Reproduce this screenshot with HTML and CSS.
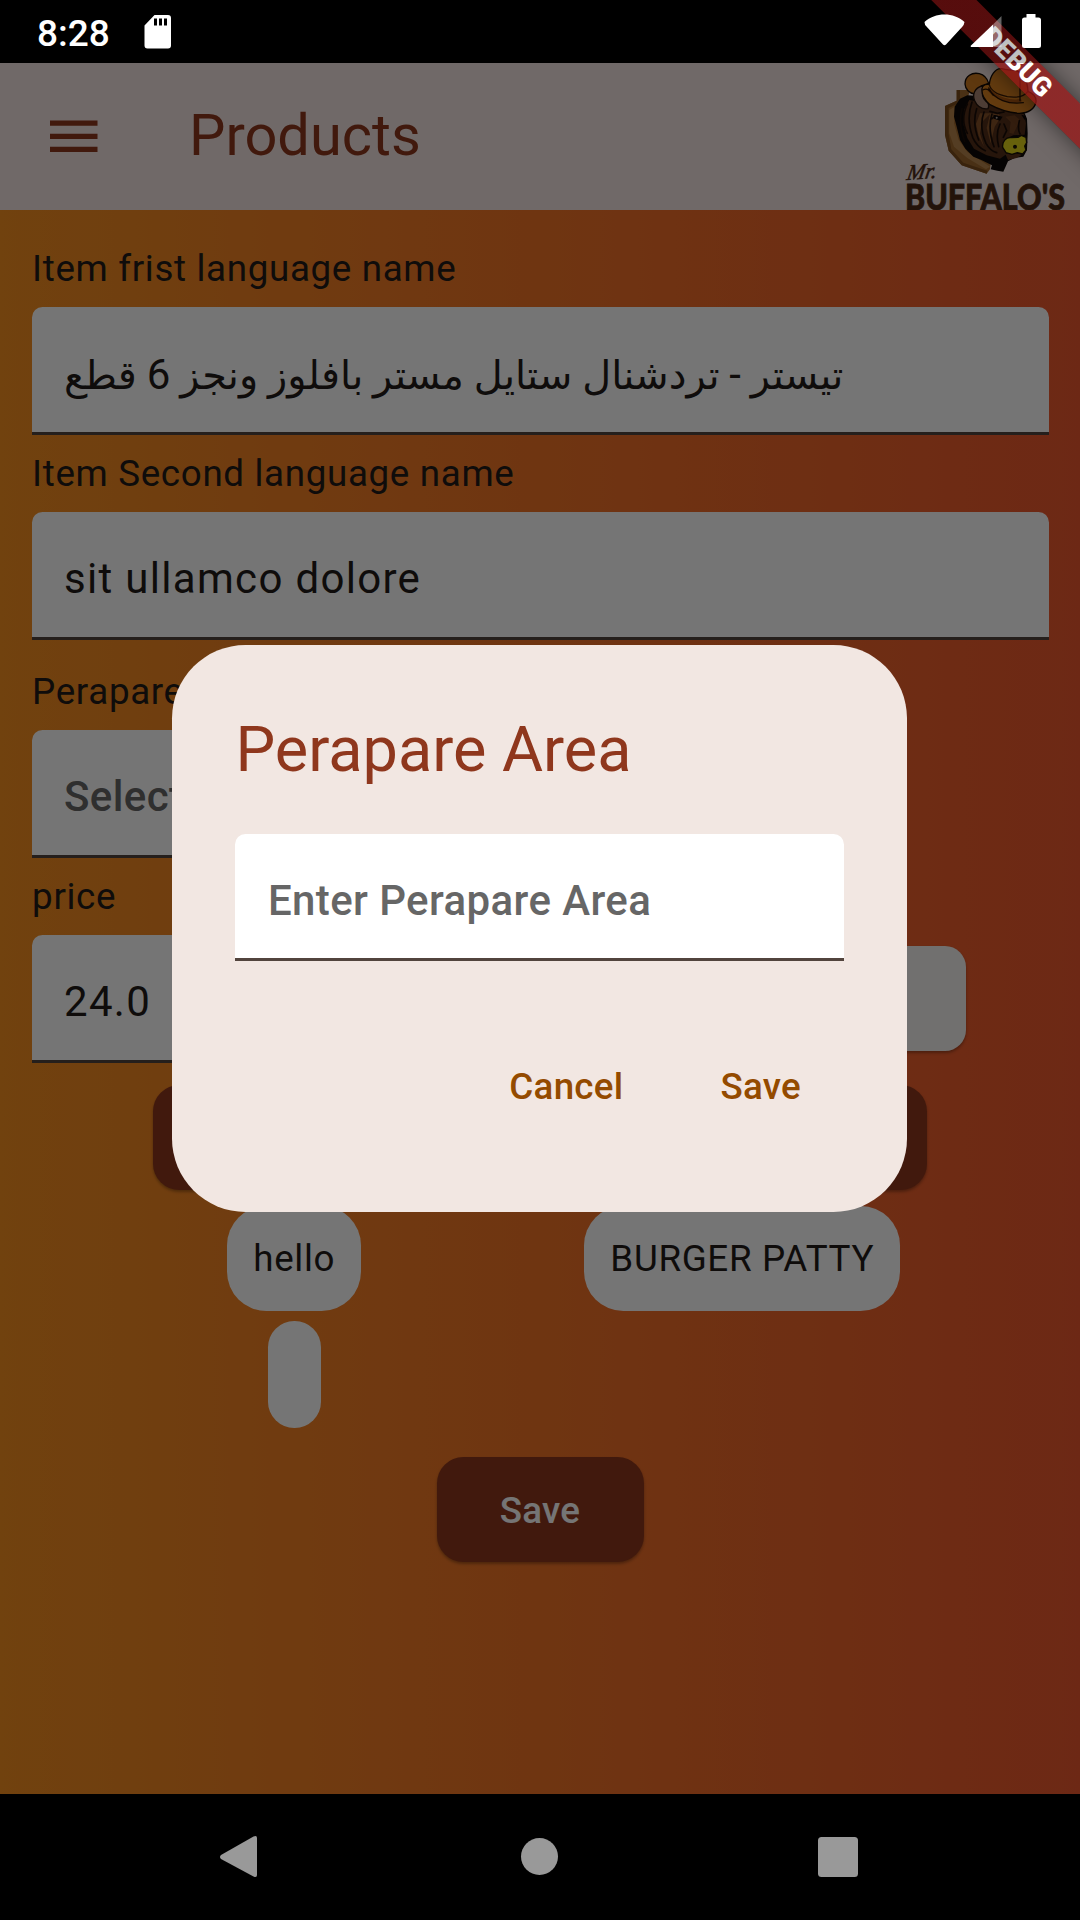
FILE: index.html
```html
<!DOCTYPE html>
<html lang="en">
<head>
<meta charset="utf-8">
<title>Products</title>
<link rel="stylesheet" href="styles.css">
</head>
<body>
<div class="screen">
  <header class="appbar">
    <svg class="menu" width="48" height="34" viewBox="0 0 48 34"><path d="M0 0.5h47.5v5.2H0zM0 13.7h47.5v5.2H0zM0 26.8h47.5V32H0z"/></svg>
    <h1 class="appbar-title">Products</h1>
    <svg class="logo" width="168" height="147" viewBox="0 0 168 147">
      <g transform="translate(-24 -63) scale(.33333)" stroke-linejoin="round" stroke-linecap="round">
        <path d="M230 270H270L262 300 240 330 300 470 332 492 330 508 320 521 245 496 206 452 195 405V318L230 302z" fill="#a06a2e"/>
        <path d="M208 330V400L222 440 262 474 318 508 330 500 300 480 262 456 236 420 222 370 224 320z" fill="#b8864c"/>
        <path d="M195 318 230 302V270H240V308L206 324V402L214 448 250 488 322 512 320 521 245 496 206 452 195 405z" fill="#7d4e1e"/>
        <path d="M262 286 240 296 224 320 222 350 230 380 240 420 256 446 280 470 304 480 336 496 332 508 352 512 370 515 384 484 404 474 430 470 441 450 443 400 441 356 430 330 330 290z" fill="#0d0807"/>
        <path d="M268 300 252 330 250 372 262 414 282 446 320 466 360 476 380 462 370 440 376 418 400 406 434 404 438 370 432 342 380 330 320 310z" fill="#532e18"/>
        <path d="M300 340 288 372 296 408 312 440 300 400 306 366 330 342 320 384 332 430 344 380 362 352 354 340z" fill="#865128"/>
        <path d="M376 350 392 366 388 398 400 402 420 360 404 346z" fill="#70401f"/>
        <path d="M262 312Q240 360 262 400M276 306Q258 356 278 412 290 440 316 452M290 326Q276 370 296 420M312 336Q296 380 318 430 330 452 350 458M336 342Q322 386 342 440M360 372Q346 400 356 440M372 372 380 392 370 412M418 362Q412 388 420 402M330 334 352 340 372 336M336 356 346 348 360 352M246 326Q234 370 254 424" fill="none" stroke="#180c07" stroke-width="5"/>
        <path d="M340 344 368 350 360 362 342 356zM424 344 438 348 434 360z" fill="#0b0606"/>
        <circle cx="350" cy="353" r="3" fill="#b8a79d"/>
        <path d="M376 462 400 458 426 464 410 474 384 480z" fill="#5b321b"/>
        <path d="M255 252C255 228 276 216 298 221 314 225 322 236 326 250L304 258 284 282C268 280 256 268 255 252z" fill="#cc7a22" stroke="#150b06" stroke-width="4"/>
        <path d="M306 258C284 264 276 284 284 302 292 320 308 328 324 326 328 318 326 308 318 304 308 296 302 278 312 262z" fill="#a98673" stroke="#1f110b" stroke-width="4"/>
        <path d="M306 266C308 256 318 252 328 254 330 228 346 204 364 206 378 208 388 212 404 210 428 218 442 236 444 274 458 280 470 290 468 306 464 326 446 340 418 340 384 338 352 326 330 314 314 300 304 284 306 266z" fill="#d88222" stroke="#150b06" stroke-width="4"/>
        <path d="M328 254C332 274 352 284 382 290 410 294 434 288 444 274" fill="none" stroke="#3a1a06" stroke-width="4"/>
        <path d="M330 272C350 296 392 308 420 302" fill="none" stroke="#a65412" stroke-width="10"/>
        <path d="M326 264C344 300 386 314 430 308M420 236V302M308 270C322 262 330 272 340 286" fill="none" stroke="#2a1305" stroke-width="4"/>
        <path d="M368 442C366 426 378 410 394 413L414 412 424 406 438 412 440 428 434 438 438 450 428 462 412 458 396 463 378 458z" fill="#e0d41c" stroke="#171006" stroke-width="4"/>
        <circle cx="405" cy="440" r="6" fill="#191007"/>
      </g>
      <text class="logo-script" transform="translate(2 117) rotate(-4) skewX(-14)">Mr.</text>
      <text x="1" y="146.500" class="logo-word" textLength="160" lengthAdjust="spacingAndGlyphs">BUFFALO'S</text>
    </svg>
  </header>

  <main class="content">
    <section class="group">
      <label class="label">Item frist language name</label>
      <div class="field"><bdi class="arabic" dir="rtl" lang="ar">تيستر <span class="digit">-</span> تردشنال ستايل مستر بافلوز ونجز <span class="digit">6</span> قطع</bdi></div>
    </section>
    <section class="group group-gap">
      <label class="label">Item Second language name</label>
      <div class="field">sit ullamco dolore</div>
    </section>
    <section class="group">
      <label class="label">Perapare Area</label>
      <div class="field half hint">Select</div>
    </section>
    <section class="group">
      <label class="label">price</label>
      <div class="price-row">
        <div class="field">24.0</div>
        <div class="pick"></div>
      </div>
    </section>
    <div class="wide-button"></div>
    <div class="chips">
      <div class="chip-col"><span class="chip">hello</span><span class="chip empty"></span></div>
      <div class="chip-col"><span class="chip">BURGER PATTY</span></div>
    </div>
    <div class="save-button">Save</div>
  </main>

  <div class="barrier">
    <div class="dialog">
      <h2 class="dialog-title">Perapare Area</h2>
      <div class="field hint dialog-field">Enter Perapare Area</div>
      <div class="actions"><span>Cancel</span><span>Save</span></div>
    </div>
  </div>

  <div class="banner">DEBUG</div>

  <div class="statusbar">
    <span class="clock">8:28</span>
    <svg class="sd" width="28" height="36" viewBox="0 0 28 36"><path fill-rule="evenodd" d="M10.500 1H24q3 0 3 3v27.500q0 3-3 3H3.500q-3 0-3-3V11.500zM10 4.500V11.500h3V4.500zM15 4.500V11.500h3V4.500zM20 4.500V11.500h3V4.500z"/></svg>
    <svg class="signals" width="118" height="36" viewBox="0 0 118 36">
      <path d="M0.500 8C11-2 30-2 40.500 8q-.5 3-2 4.500L22 30.500q-1.500 1.500-3 0L2.500 12.500Q.5 11 .5 8z"/>
      <path d="M77.500 2v31H69V10.500z" opacity=".38"/>
      <path d="M69 10.500V33H47q-.8-.5 0-1.500z"/>
      <path d="M102.500 0h9v3.500h3q2.500 0 2.500 2.500V31.500q0 2.500-2.500 2.500H100.500q-2.500 0-2.500-2.500V6Q98 3.500 100.500 3.500h2z"/>
    </svg>
  </div>

  <nav class="navbar">
    <svg width="640" height="44" viewBox="0 0 640 44">
      <path d="M1 20 33.500 1.500q3.500-1.500 3.500 1.500V40q0 3-3.500 1.500L1 24q-2-2 0-4z"/>
      <circle cx="319.500" cy="21.500" r="18.500"/>
      <rect x="598" y="2" width="40" height="40" rx="3.500"/>
    </svg>
  </nav>
</div>
</body>
</html>
```
FILE: styles.css
```css
* { box-sizing: border-box; }

body {
  margin: 0;
  background: #000;
  font-family: Roboto, "DejaVu Sans", sans-serif;
}

.screen {
  position: relative;
  display: flex;
  flex-direction: column;
  width: 1080px;
  height: 1920px;
  padding-top: 63px;
  overflow: hidden;
  background: #000;
}

/* App bar */
.appbar {
  display: flex;
  align-items: center;
  height: 147px;
  padding-left: 50px;
  background: #f4e5e2;
}

.menu { fill: #8f371d; }

.appbar-title {
  flex: 1;
  margin: -1px 0 0 91px;
  color: #8f371d;
  font-size: 57.75px;
  font-weight: 400;
  line-height: 73.5px;
}

.logo { margin-right: 8px; overflow: visible; }
.logo-script {
  fill: #4e2b16;
  stroke: #4e2b16;
  stroke-width: .5;
  font-family: "Liberation Serif", serif;
  font-size: 22px;
  font-style: italic;
}
.logo-word {
  fill: #4e2b16;
  stroke: #4e2b16;
  stroke-width: .8;
  font-family: Lato, sans-serif;
  font-size: 36px;
  font-weight: 900;
}

/* Form */
.content {
  flex: 1;
  display: flex;
  flex-direction: column;
  padding: 31.5px 31.5px 0;
  background: linear-gradient(90deg, #f69020, #ee582e);
  color: #221b19;
}

.group { height: 204.75px; }
.group-gap { margin-bottom: 13.5px; }

.label {
  display: block;
  margin-bottom: 13.4px;
  padding: 1.4px 0 0 .6px;
  height: 52.5px;
  font-size: 36.75px;
  line-height: 52.5px;
  letter-spacing: .66px;
}

.field {
  display: flex;
  align-items: center;
  height: 127.4px;
  padding: 8px 32.5px 0;
  border-bottom: 3px solid #52443d;
  border-radius: 10.5px 10.5px 0 0;
  background: #fff;
  font-size: 42px;
  line-height: 63px;
  letter-spacing: 1.31px;
}

.half { width: 480px; }
.hint { color: #666; font-weight: 500; letter-spacing: .4px; }

.arabic {
  padding-top: 2px;
  font-size: 39.8px;
  letter-spacing: 0;
  white-space: nowrap;
}
.digit { font-size: 42px; }

.price-row {
  display: grid;
  grid-template-columns: 480px 300px;
  align-items: center;
  gap: 154.5px;
}

.pick {
  height: 105px;
  border-radius: 21px;
  background: #f6f4f2;
  box-shadow: 0 2px 3px rgba(0, 0, 0, .3);
}

.wide-button, .save-button {
  align-self: center;
  height: 105px;
  border-radius: 26.25px;
  background: #8f371d;
  box-shadow: 0 2px 3px rgba(0, 0, 0, .3);
}
.wide-button { width: 774px; margin: 11.2px 0 15.4px; flex: none; }

.chips {
  display: grid;
  grid-template-columns: 448px 448px;
  justify-content: center;
  margin-left: -43.5px;
}
.chip-col {
  display: flex;
  flex-direction: column;
  align-items: center;
  gap: 10px;
}
.chip {
  padding: 27.25px 26.25px 0;
  height: 105px;
  border-radius: 39.4px;
  background: #fff;
  font-size: 36.75px;
  line-height: 52.5px;
  letter-spacing: .66px;
}
.empty { height: 107.6px; width: 52.5px; border-radius: 26.25px; }

.save-button {
  width: 207px;
  margin-top: 28.5px;
  color: #fff;
  font-size: 36.75px;
  font-weight: 500;
  line-height: 107px;
  letter-spacing: .26px;
  text-align: center;
}

/* Modal */
.barrier {
  position: absolute;
  inset: 63px 0 126px;
  background: rgba(0, 0, 0, .54);
}
.dialog {
  position: absolute;
  left: 172.4px;
  top: 582px;
  width: 735px;
  height: 567px;
  padding: 63px;
  border-radius: 73.5px;
  background: #f2e7e2;
}
.dialog-title {
  margin: 0 0 42px;
  color: #8f371d;
  font-size: 63px;
  font-weight: 400;
  line-height: 84px;
}
.actions {
  display: flex;
  justify-content: flex-end;
  gap: 97px;
  padding: 100px 43.5px 0 0;
  color: #944b00;
  font-size: 36.75px;
  font-weight: 500;
  line-height: 52.5px;
  letter-spacing: .26px;
}

/* Corner ribbon */
.banner {
  position: absolute;
  left: 866.9px;
  top: 47.3px;
  width: 300px;
  height: 31.5px;
  transform: rotate(45deg);
  background:
    linear-gradient(rgba(183, 28, 28, .63), rgba(183, 28, 28, .63)),
    rgba(0, 0, 0, .38);
  box-shadow: 0 0 22px rgba(0, 0, 0, .5);
  color: #fff;
  font-size: 26.8px;
  font-weight: 900;
  line-height: 31.5px;
  text-align: center;
}

/* System bars */
.statusbar {
  position: absolute;
  inset: 0 0 auto;
  display: flex;
  height: 63px;
  padding: 14px 38px 0 37px;
  background: rgba(0, 0, 0, .25);
  color: #fff;
  fill: #fff;
}
.clock { width: 106.5px; font-size: 37px; font-weight: 500; line-height: 39px; }
.signals { margin-left: auto; }

.navbar {
  display: flex;
  justify-content: center;
  height: 126px;
  padding-top: 41px;
  fill: #999;
}
```
